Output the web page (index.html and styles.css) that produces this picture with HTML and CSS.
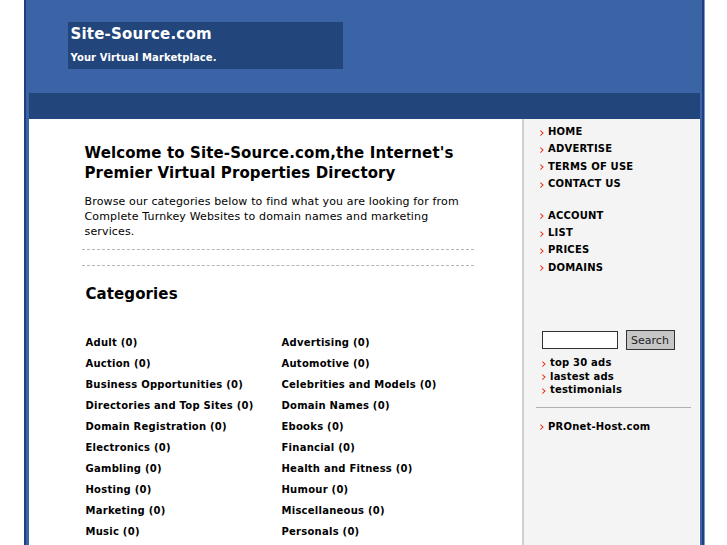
FILE: index.html
```html
<!DOCTYPE html>
<html lang="en">
<head>
    <meta charset="UTF-8">
    <title>Site-Source.com - Your Virtual Marketplace</title>
    <link rel="stylesheet" href="styles.css">
</head>
<body>
    <div class="page">
        <div class="wrap">
            <div class="header">
                <div class="logo">
                    <h1>Site-Source.com</h1>
                    <p>Your Virtual Marketplace.</p>
                </div>
            </div>
            <div class="topbar"></div>

            <div class="columns">
                <div class="main">
                    <h2>Welcome to Site-Source.com,the Internet's Premier Virtual Properties Directory</h2>
                    <p class="intro">Browse our categories below to find what you are looking for from Complete Turnkey Websites to domain names and marketing services.</p>
                    <div class="dash"></div>
                    <div class="dash"></div>

                    <h3>Categories</h3>
                    <div class="cats">
                        <a href="#">Adult (0)</a>
                        <a href="#">Advertising (0)</a>
                        <a href="#">Auction (0)</a>
                        <a href="#">Automotive (0)</a>
                        <a href="#">Business Opportunities (0)</a>
                        <a href="#">Celebrities and Models (0)</a>
                        <a href="#">Directories and Top Sites (0)</a>
                        <a href="#">Domain Names (0)</a>
                        <a href="#">Domain Registration (0)</a>
                        <a href="#">Ebooks (0)</a>
                        <a href="#">Electronics (0)</a>
                        <a href="#">Financial (0)</a>
                        <a href="#">Gambling (0)</a>
                        <a href="#">Health and Fitness (0)</a>
                        <a href="#">Hosting (0)</a>
                        <a href="#">Humour (0)</a>
                        <a href="#">Marketing (0)</a>
                        <a href="#">Miscellaneous (0)</a>
                        <a href="#">Music (0)</a>
                        <a href="#">Personals (0)</a>
                    </div>
                </div>

                <div class="sidebar">
                    <ul class="nav">
                        <li><a href="#">HOME</a></li>
                        <li><a href="#">ADVERTISE</a></li>
                        <li><a href="#">TERMS OF USE</a></li>
                        <li><a href="#">CONTACT US</a></li>
                    </ul>
                    <ul class="nav second">
                        <li><a href="#">ACCOUNT</a></li>
                        <li><a href="#">LIST</a></li>
                        <li><a href="#">PRICES</a></li>
                        <li><a href="#">DOMAINS</a></li>
                    </ul>

                    <form class="search" onsubmit="return false;">
                        <input type="text" class="search-box">
                        <button type="submit" class="search-btn">Search</button>
                    </form>
                    <ul class="links">
                        <li><a href="#">top 30 ads</a></li>
                        <li><a href="#">lastest ads</a></li>
                        <li><a href="#">testimonials</a></li>
                    </ul>
                    <div class="rule"></div>
                    <ul class="nav partner">
                        <li><a href="#">PROnet-Host.com</a></li>
                    </ul>
                </div>
            </div>
        </div>
    </div>
</body>
</html>
```

FILE: styles.css
```css
* {
    margin: 0;
    padding: 0;
    box-sizing: border-box;
}

body {
    font-family: 'DejaVu Sans', Verdana, sans-serif;
    background: #fff;
    color: #000;
}

a {
    color: #000;
    text-decoration: none;
}

ul {
    list-style: none;
}

.page {
    width: 680px;
    margin: 0 auto;
    min-height: 100vh;
    border-left: 2px solid #1f3f7e;
    border-right: 2px solid #1f3f7e;
    box-shadow: 1px 0 0 #7a98cc;
}

.wrap {
    min-height: 100vh;
    border-left: 3px solid #3a64a6;
    border-right: 2px solid #3a64a6;
    display: flex;
    flex-direction: column;
}

.header {
    height: 93px;
    background: #3a64a6;
    padding: 22px 0 0 39px;
}

.logo {
    width: 275px;
    height: 47px;
    background: #22457c;
    color: #fff;
    padding: 3px 3px;
}

.logo h1 {
    font-size: 15px;
    line-height: 18px;
    font-weight: bold;
    letter-spacing: 0.2px;
}

.logo p {
    font-size: 10px;
    font-weight: bold;
    margin-top: 9px;
    letter-spacing: 0.1px;
}

.topbar {
    height: 26px;
    background: #22457c;
}

.columns {
    flex: 1;
    display: flex;
}

.main {
    width: 493px;
    padding: 24px 48px 0 53px;
}

.main h2 {
    font-size: 15px;
    line-height: 20px;
    font-weight: bold;
    padding-left: 3px;
    letter-spacing: 0.12px;
}

.intro {
    font-size: 11px;
    line-height: 15px;
    margin-top: 11px;
    padding-left: 3px;
    letter-spacing: 0.15px;
}

.dash {
    border-top: 1px dashed #b5b5b5;
    margin-top: 10px;
}

.dash + .dash {
    margin-top: 15px;
}

.main h3 {
    font-size: 15px;
    font-weight: bold;
    line-height: 20px;
    margin-top: 18px;
    padding-left: 4px;
    letter-spacing: 0.1px;
}

.cats {
    display: grid;
    grid-template-columns: 196px 1fr;
    row-gap: 8px;
    margin-top: 32px;
    padding-left: 4px;
}

.cats a {
    font-size: 10px;
    font-weight: bold;
    line-height: 13px;
    letter-spacing: 0.25px;
}

.sidebar {
    width: 177px;
    background: #f4f4f4;
    border-left: 2px solid #cfcfcf;
    padding: 4px 0 0 14px;
}

.nav li {
    font-size: 10px;
    font-weight: bold;
    line-height: 17.4px;
    letter-spacing: 0.2px;
}

.nav li::before,
.links li::before {
    content: "";
    display: inline-block;
    width: 2.5px;
    height: 2.5px;
    border-top: 1.5px solid #e8321e;
    border-right: 1.5px solid #e8321e;
    transform: rotate(45deg);
    margin: 0 6px 0 1px;
    vertical-align: 1px;
}

.nav.second {
    margin-top: 14px;
}

.search {
    display: flex;
    align-items: center;
    gap: 8px;
    margin-top: 54px;
    padding-left: 4px;
}

.search-box {
    width: 76px;
    height: 18px;
    border: 1px solid #333;
    background: #fff;
}

.search-btn {
    width: 49px;
    height: 20px;
    background: #c6c6c6;
    border: 1px solid #333;
    font-family: 'DejaVu Sans', Verdana, sans-serif;
    font-size: 11px;
    color: #222;
}

.links {
    margin-top: 6px;
    padding-left: 2px;
}

.links li {
    font-size: 10px;
    font-weight: bold;
    line-height: 13.5px;
    letter-spacing: 0.2px;
}

.rule {
    width: 155px;
    border-top: 1px solid #b0b0b0;
    margin: 10px 0 0 -2px;
}

.nav.partner {
    margin-top: 10px;
}
```
